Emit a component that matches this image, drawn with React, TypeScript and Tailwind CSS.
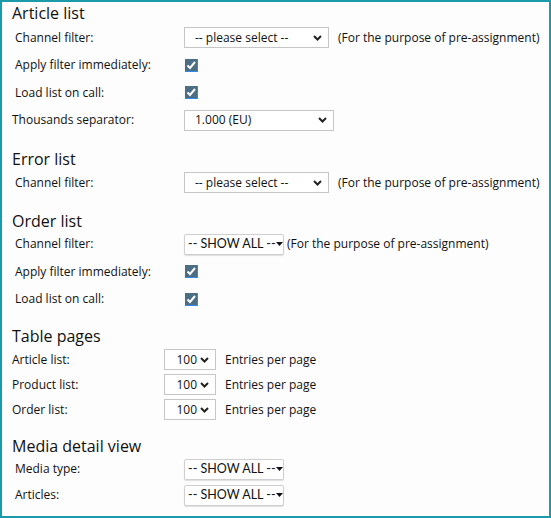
import { ReactNode } from "react";

const PURPOSE = "(For the purpose of pre-assignment)";

function Chevron() {
  return (
    <svg width="9" height="6" viewBox="0 0 9 6" className="shrink-0">
      <path d="M1 1 L4.5 4.5 L8 1" fill="none" stroke="#222" strokeWidth="2" />
    </svg>
  );
}

function Triangle() {
  return (
    <svg width="7" height="4" viewBox="0 0 7 4" className="shrink-0">
      <path d="M0 0 H7 L3.5 4 Z" fill="#111" />
    </svg>
  );
}

function Select({ value, width }: { value: string; width: string }) {
  return (
    <div
      className={`${width} h-[21px] flex items-center justify-between pl-[10px] pr-[6px] bg-white border border-[#c6c6c6] text-[12px]`}
    >
      <span>{value}</span>
      <Chevron />
    </div>
  );
}

function SmallSelect() {
  return (
    <div className="w-[52px] h-[21px] flex items-center justify-end gap-[3px] pr-[6px] bg-white border border-[#c6c6c6] text-[12px]">
      <span>100</span>
      <Chevron />
    </div>
  );
}

function ShowAll() {
  return (
    <div className="w-[100px] h-[21px] flex items-center pl-[3px] pr-[3px] bg-white border border-[#cfcfcf] rounded-[2px] shadow-[0_1px_1px_rgba(0,0,0,0.12)] font-['Lato',sans-serif] text-[12.5px] text-[#111]">
      <span className="whitespace-nowrap">-- SHOW ALL --</span>
      <Triangle />
    </div>
  );
}

function Checkbox() {
  return (
    <svg width="13" height="13" viewBox="0 0 13 13" className="ml-[1px]">
      <rect x="0" y="0" width="13" height="13" fill="#2f8be6" />
      <rect x="0" y="0" width="12" height="12" fill="#4b6e84" />
      <path d="M2.5 6.5 L5 9 L10 3" fill="none" stroke="#fff" strokeWidth="2" />
    </svg>
  );
}

function Heading({ children, className = "" }: { children: ReactNode; className?: string }) {
  return <div className={`h-[20px] leading-[20px] text-[16px] ${className}`}>{children}</div>;
}

function Row({
  label,
  children,
  indent = true,
  height = "h-[27.5px]",
}: {
  label: string;
  children: ReactNode;
  indent?: boolean;
  height?: string;
}) {
  return (
    <div className={`${height} flex items-center`}>
      <div className={`${indent ? "pl-[3px] w-[172px]" : "w-[172px]"} shrink-0`}>{label}</div>
      {children}
    </div>
  );
}

function PageRow({ label }: { label: string }) {
  return (
    <div className="h-[25px] flex items-center">
      <div className="w-[152px] shrink-0">{label}</div>
      <SmallSelect />
      <span className="ml-[9px]">Entries per page</span>
    </div>
  );
}

export default function App() {
  return (
    <div className="w-[551px] h-[518px] border-2 border-[#1b9aaa] bg-[#fdfdfd] pl-[10px] pt-[1px] font-['Open_Sans',sans-serif] text-[12px] text-[#111]">
      <Heading className="!h-[21px]">Article list</Heading>
      <Row label="Channel filter:">
        <Select value="-- please select --" width="w-[145px]" />
        <span className="ml-[9px]">{PURPOSE}</span>
      </Row>
      <Row label="Apply filter immediately:">
        <Checkbox />
      </Row>
      <Row label="Load list on call:">
        <Checkbox />
      </Row>
      <Row label="Thousands separator:" indent={false}>
        <Select value="1.000 (EU)" width="w-[150px]" />
      </Row>

      <Heading className="mt-[15px]">Error list</Heading>
      <Row label="Channel filter:">
        <Select value="-- please select --" width="w-[145px]" />
        <span className="ml-[9px]">{PURPOSE}</span>
      </Row>

      <Heading className="mt-[14px]">Order list</Heading>
      <Row label="Channel filter:">
        <ShowAll />
        <span className="ml-[3px]">{PURPOSE}</span>
      </Row>
      <Row label="Apply filter immediately:">
        <Checkbox />
      </Row>
      <Row label="Load list on call:">
        <Checkbox />
      </Row>

      <Heading className="mt-[13px]">Table pages</Heading>
      <div className="pt-px">
        <PageRow label="Article list:" />
        <PageRow label="Product list:" />
        <PageRow label="Order list:" />
      </div>

      <Heading className="mt-[14px]">Media detail view</Heading>
      <Row label="Media type:" height="h-[26px]">
        <ShowAll />
      </Row>
      <Row label="Articles:" height="h-[26px]">
        <ShowAll />
      </Row>
    </div>
  );
}
